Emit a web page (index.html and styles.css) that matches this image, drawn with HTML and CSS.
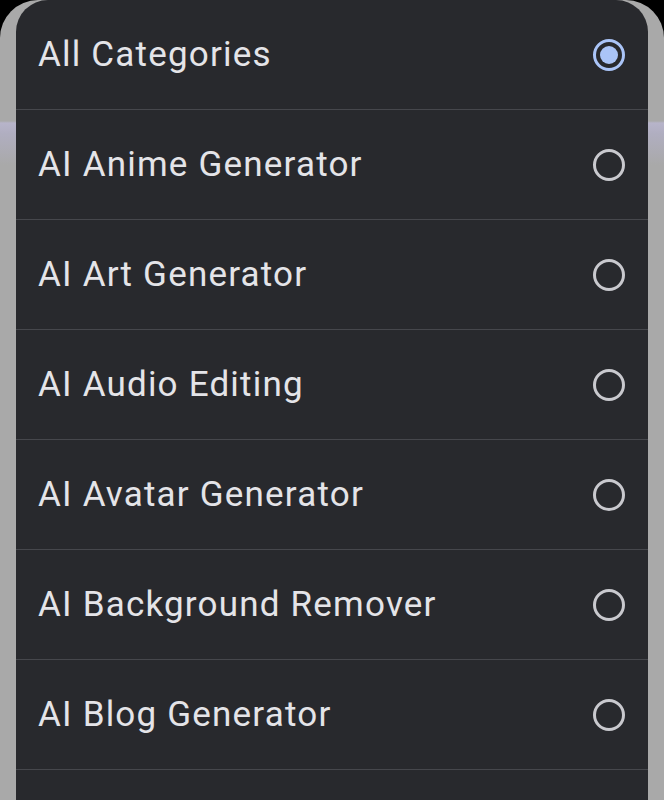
FILE: index.html
```html
<!DOCTYPE html>
<html lang="en">
<head>
    <meta charset="UTF-8">
    <meta name="viewport" content="width=device-width, initial-scale=1.0">
    <title>Categories</title>
    <link rel="stylesheet" href="styles.css">
</head>
<body>
    <div class="backdrop">
        <div class="sheet">
            <div class="option">
                <span>All Categories</span>
                <span class="radio checked"></span>
            </div>
            <div class="option">
                <span>AI Anime Generator</span>
                <span class="radio"></span>
            </div>
            <div class="option">
                <span>AI Art Generator</span>
                <span class="radio"></span>
            </div>
            <div class="option">
                <span>AI Audio Editing</span>
                <span class="radio"></span>
            </div>
            <div class="option">
                <span>AI Avatar Generator</span>
                <span class="radio"></span>
            </div>
            <div class="option">
                <span>AI Background Remover</span>
                <span class="radio"></span>
            </div>
            <div class="option">
                <span>AI Blog Generator</span>
                <span class="radio"></span>
            </div>
            <!-- next row only starts at the bottom edge -->
            <div class="option"></div>
        </div>
    </div>
</body>
</html>
```

FILE: styles.css
```css
html, body {
    margin: 0;
    padding: 0;
    height: 100%;
    overflow: hidden;
}
body {
    background-color: #000;
    font-family: Roboto, "Liberation Sans", sans-serif;
}
.backdrop {
    height: 100%;
    padding: 0 16px;
    border-radius: 38px 38px 0 0;
    background: linear-gradient(to bottom, #a9a9a9 0, #a9a9a9 121px, #b7b4ca 123px, #b0aec0 134px, #a9a9a9 165px, #a9a9a9 100%);
}
.sheet {
    height: 100%;
    background-color: #28292d;
    border-radius: 32px 32px 0 0;
    overflow: hidden;
}
.option {
    display: flex;
    justify-content: space-between;
    align-items: center;
    height: 109px;
    padding: 0 23px 0 22px;
    border-bottom: 1px solid #46474c;
    color: #e4e4e8;
    font-size: 35px;
    letter-spacing: 1.2px;
}
.radio {
    width: 26px;
    height: 26px;
    border: 3px solid #c9c9ce;
    border-radius: 50%;
    box-sizing: content-box;
    position: relative;
}
.radio.checked {
    border-color: #aac4f7;
}
.radio.checked::after {
    content: "";
    position: absolute;
    left: 4px;
    top: 4px;
    width: 18px;
    height: 18px;
    border-radius: 50%;
    background-color: #aac4f7;
}
```
